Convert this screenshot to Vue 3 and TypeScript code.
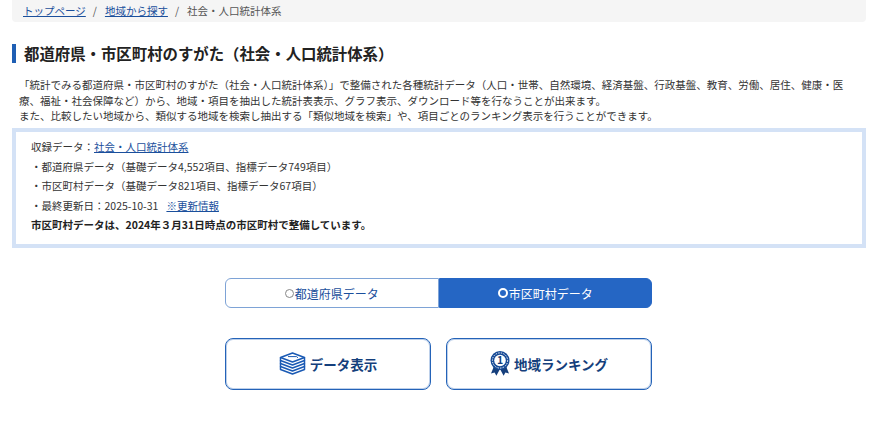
<script setup lang="ts">
import { ref } from 'vue';

const activeTab = ref<'pref' | 'city'>('city');
</script>

<template>
  <div class="page">
    <nav class="breadcrumb">
      <a href="#">トップページ</a>
      <span class="sep">/</span>
      <a href="#">地域から探す</a>
      <span class="sep">/</span>
      <span class="current">社会・人口統計体系</span>
    </nav>

    <h1 class="title">都道府県・市区町村のすがた（社会・人口統計体系）</h1>

    <p class="lead">
      「統計でみる都道府県・市区町村のすがた（社会・人口統計体系）」で整備された各種統計データ（人口・世帯、自然環境、経済基盤、行政基盤、教育、労働、居住、健康・医療、福祉・社会保障など）から、地域・項目を抽出した統計表表示、グラフ表示、ダウンロード等を行なうことが出来ます。<br />
      また、比較したい地域から、類似する地域を検索し抽出する「類似地域を検索」や、項目ごとのランキング表示を行うことができます。
    </p>

    <div class="info">
      <p>収録データ：<a href="#">社会・人口統計体系</a></p>
      <p>・都道府県データ（基礎データ4,552項目、指標データ749項目）</p>
      <p>・市区町村データ（基礎データ821項目、指標データ67項目）</p>
      <p>・最終更新日：2025-10-31<a class="update" href="#">※更新情報</a></p>
      <p class="note">市区町村データは、2024年３月31日時点の市区町村で整備しています。</p>
    </div>

    <div class="tabs">
      <button class="tab" :class="{ active: activeTab === 'pref' }" @click="activeTab = 'pref'">
        <i class="dot"></i>都道府県データ
      </button>
      <button class="tab" :class="{ active: activeTab === 'city' }" @click="activeTab = 'city'">
        <i class="dot"></i>市区町村データ
      </button>
    </div>

    <div class="actions">
      <button class="action">
        <svg width="27" height="23" viewBox="0 0 27 23" fill="none" stroke="#1a5ab4" stroke-width="1.5" stroke-linejoin="round">
          <path d="M13.5 1 25.5 5.5 13.5 10 1.5 5.5Z" />
          <path d="M9 4.6h8.5l1.5 1.2" stroke-width="1" />
          <path d="M1.5 5.5v3l12 4.5 12-4.5v-3" />
          <path d="M1.5 8.5v3l12 4.5 12-4.5v-3" />
          <path d="M1.5 11.5v3l12 4.5 12-4.5v-3" />
          <path d="M1.5 14.5v3l12 4.5 12-4.5v-3" />
        </svg>
        データ表示
      </button>
      <button class="action">
        <svg width="20" height="25" viewBox="0 0 20 25">
          <path d="M4.5 14 1 22.5l3.6-1 1.8 3.3L10 18l3.6 6.8 1.8-3.3 3.6 1L15.5 14Z" fill="#153f7c" />
          <circle cx="10" cy="9.5" r="9.5" fill="#164a96" />
          <circle cx="10" cy="9.5" r="7.6" fill="none" stroke="#fff" stroke-width="1" stroke-dasharray="1.4 1.2" />
          <circle cx="10" cy="9.5" r="5.8" fill="#fff" />
          <text x="10" y="13.2" text-anchor="middle" class="rank">1</text>
        </svg>
        地域ランキング
      </button>
    </div>
  </div>
</template>

<style scoped>
.page {
  width: 876px;
  height: 426px;
  box-sizing: border-box;
  padding: 0 10px 0 12px;
  overflow: hidden;
  background: #fff;
  color: #333;
  font-family: "Noto Sans CJK JP", "Noto Sans", sans-serif;
}

a {
  color: #1a4f9c;
}

.breadcrumb {
  display: flex;
  align-items: center;
  height: 22px;
  padding: 0 0 1px 11px;
  box-sizing: border-box;
  background: #f5f5f5;
  border-radius: 0 0 4px 4px;
  font-size: 10.5px;
  color: #555;
}

.sep {
  margin: 0 8px 0 7px;
}

.title {
  display: flex;
  align-items: center;
  height: 19px;
  margin: 22px 0 0;
  padding: 0 0 1px 8px;
  box-sizing: border-box;
  border-left: 4px solid #1f5fb4;
  font-size: 15.4px;
  font-weight: 700;
  color: #222;
}

.lead {
  margin: 14px 0 0;
  padding: 0 20px 0 7px;
  font-size: 10.5px;
  line-height: 15.5px;
  color: #333;
}

.info {
  margin-top: 4.5px;
  height: 120px;
  box-sizing: border-box;
  padding: 5px 15px;
  border: 4px solid #d4e2f6;
  font-size: 10.5px;
}

.info p {
  margin: 0;
  line-height: 19.5px;
}

.info .note {
  font-weight: 700;
  color: #222;
}

.update {
  margin-left: 8px;
}

.tabs {
  display: flex;
  width: 427px;
  height: 30px;
  margin: 30px 0 0 213px;
}

.tab {
  flex: 1;
  display: flex;
  align-items: center;
  justify-content: center;
  padding: 0;
  border: 1px solid #7ea3d6;
  background: #fff;
  color: #1a4f9c;
  font: inherit;
  font-size: 12px;
  border-radius: 6px 0 0 6px;
}

.tab + .tab {
  border-radius: 0 6px 6px 0;
}

.tab.active {
  background: #2566c4;
  border-color: #2566c4;
  color: #fff;
}

.dot {
  width: 7px;
  height: 7px;
  border: 1px solid #888;
  border-radius: 50%;
  margin-right: 1px;
}

.tab.active .dot {
  width: 6px;
  height: 6px;
  border: 2px solid #fff;
}

.actions {
  display: flex;
  gap: 15px;
  margin: 30px 0 0 213px;
}

.action {
  display: flex;
  align-items: center;
  justify-content: center;
  gap: 4px;
  width: 206px;
  height: 52px;
  padding: 0 0 1px;
  border: 1px solid #2463b8;
  border-radius: 8px;
  box-shadow: inset 0 0 0 1px rgba(36, 99, 184, 0.3);
  background: #fff;
  color: #153f7c;
  font: inherit;
  font-size: 13.5px;
  font-weight: 700;
}

.rank {
  font-size: 10.5px;
  font-weight: 700;
  fill: #153f7c;
}
</style>
